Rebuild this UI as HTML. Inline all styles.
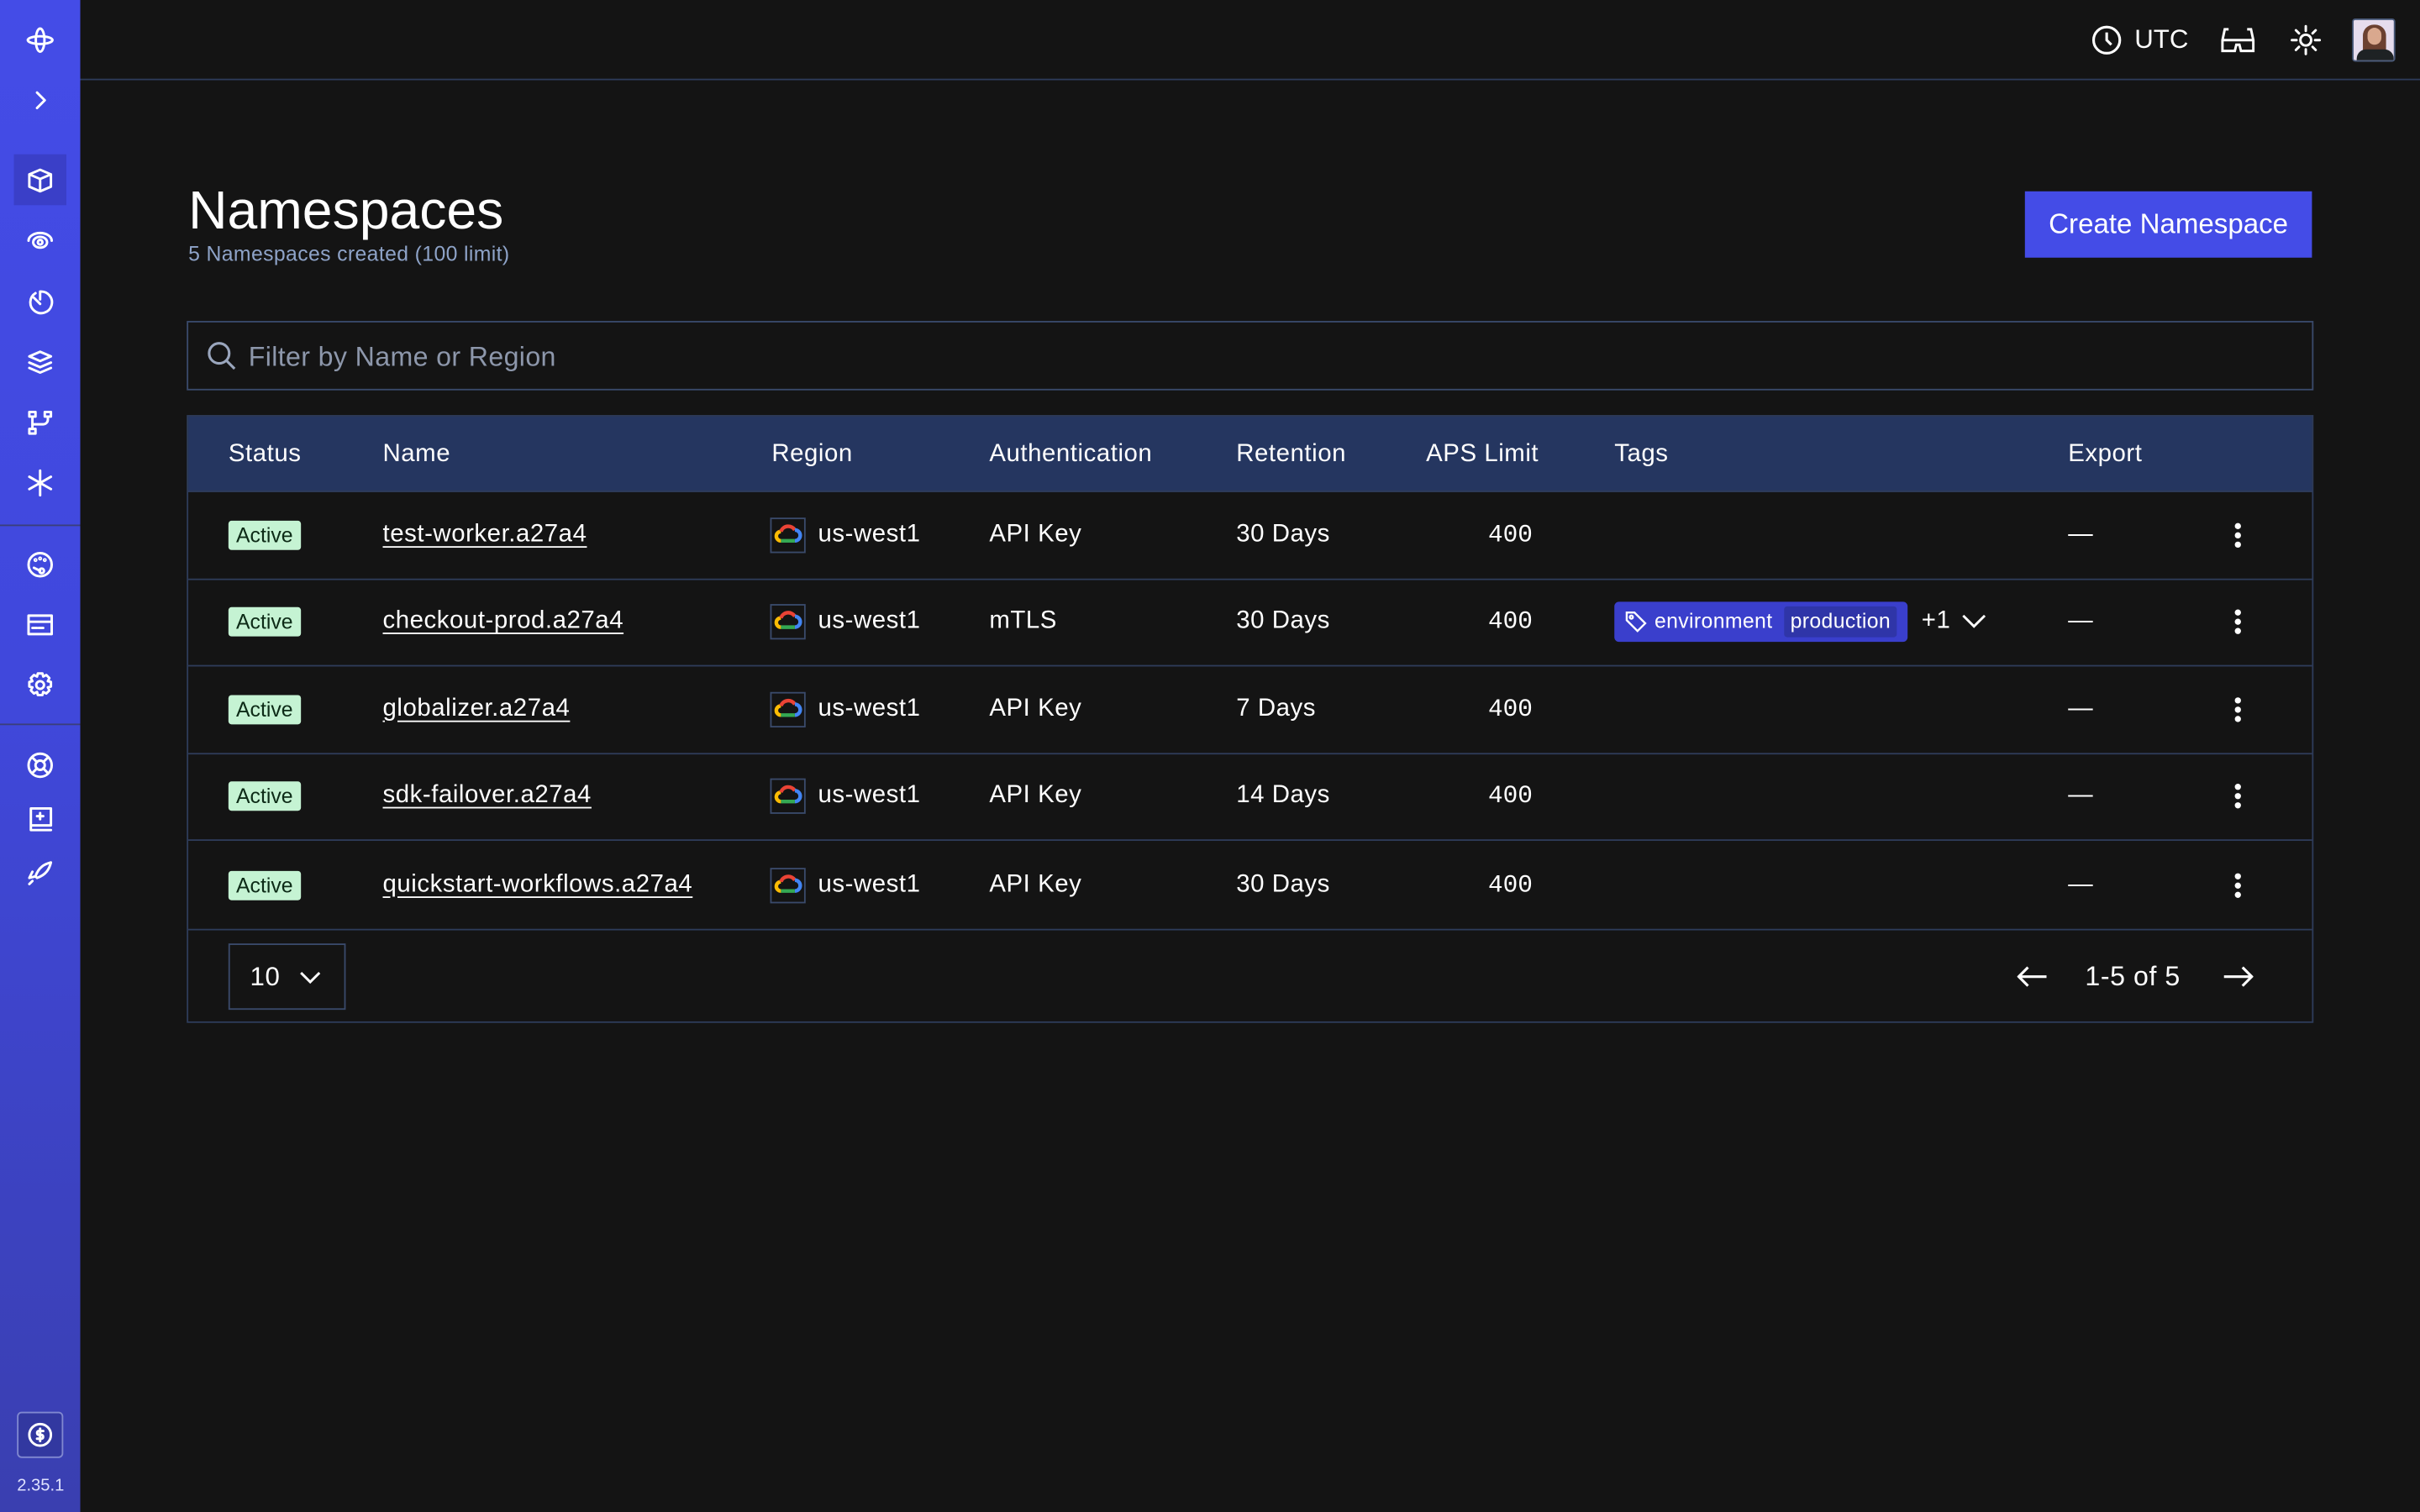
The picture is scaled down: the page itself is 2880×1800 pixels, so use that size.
<!DOCTYPE html>
<html><head><meta charset="utf-8"><style>
*{box-sizing:border-box;margin:0;padding:0}
html,body{width:2880px;height:1800px;overflow:hidden;background:#141414}
#w{width:1568px;height:980px;transform:scale(1.836735);transform-origin:0 0;position:relative;background:#141414;font-family:"Liberation Sans",sans-serif;color:#fff}
.sb{position:absolute;left:0;top:0;width:52px;height:980px;background:linear-gradient(#444ce7 0%,#4048dc 45%,#3a3fb0 100%)}
.sb svg{position:absolute;left:17px;width:18px;height:18px;fill:none;stroke:#fff;stroke-width:1.6;stroke-linecap:round;stroke-linejoin:round}
.sep{position:absolute;left:0;width:52px;height:1px;background:#3b3f7a}
.top{position:absolute;left:52px;top:0;right:0;height:52px;border-bottom:1px solid #2e3c5a}
.a{position:absolute}
.tbl{position:absolute;left:121px;top:269px;width:1378px;height:394px;border:1px solid #2e3c5a}
.hd{position:absolute;left:0;top:0;width:100%;height:49px;background:#253660;font-size:16px;letter-spacing:.3px}
.row{position:absolute;left:0;width:100%;height:56.5px;border-top:1px solid #2e3c5a;font-size:16px;letter-spacing:.3px}
.c{position:absolute;top:50%;transform:translateY(-50%);white-space:nowrap}
.badge{background:#c5f3d3;color:#0d2b17;font-size:13.5px;padding:2px 5px;border-radius:2px;letter-spacing:0}
.nm{text-decoration:underline;text-underline-offset:3px}
.reg{width:23px;height:23px;border:1px solid #3a4a6b}
.mono{font-family:"Liberation Mono",monospace;letter-spacing:0}
.kb{width:4px}
.kb i{display:block;width:4px;height:4px;border-radius:2px;background:#fff;margin:2px 0}
</style></head><body><div id="w">
<div class="sb">
<svg style="top:17px" viewBox="0 0 18 18"><ellipse cx="9" cy="9" rx="8" ry="2.5"/><ellipse cx="9" cy="9" rx="2.8" ry="7.5"/></svg>
<svg style="top:56px" viewBox="0 0 18 18"><path d="M7 4l5 5-5 5"/></svg>
<div style="position:absolute;left:9px;top:100px;width:34px;height:33px;background:#3a3fc8"></div>
<svg style="top:108px" viewBox="0 0 18 18"><path d="M2 5l7-3 7 3v8l-7 3-7-3z M2 5l7 3 7-3 M9 8v8"/></svg>
<svg style="top:147px" viewBox="0 0 18 18"><path d="M1.5 9a7.5 5 0 0 1 15 0"/><ellipse cx="9" cy="10" rx="4.5" ry="3.5"/><circle cx="9" cy="10" r="1.5"/></svg>
<svg style="top:187px" viewBox="0 0 18 18"><path d="M6 3a7 7 0 1 0 3-1v5"/><path d="M5 6l4 4"/></svg>
<svg style="top:226px" viewBox="0 0 18 18"><path d="M9 2l7 3-7 3-7-3z M2 9l7 3 7-3 M2 12.5l7 3 7-3"/></svg>
<svg style="top:265px" viewBox="0 0 18 18"><rect x="2" y="2" width="4" height="3"/><rect x="2" y="13" width="4" height="3"/><rect x="12" y="2" width="4" height="3"/><path d="M4 5v8 M14 5v2a3 3 0 0 1-3 3H4"/></svg>
<svg style="top:304px" viewBox="0 0 18 18"><path d="M9 1v16 M2 5l14 8 M2 13l14-8"/></svg>
<div class="sep" style="top:340px"></div>
<svg style="top:357px" viewBox="0 0 18 18"><circle cx="9" cy="9" r="7.5"/><path d="M5 11l4 2"/><circle cx="10" cy="13" r="1.5"/><circle cx="6" cy="6" r=".5"/><circle cx="9" cy="5" r=".5"/><circle cx="12" cy="6" r=".5"/></svg>
<svg style="top:396px" viewBox="0 0 18 18"><rect x="1.5" y="3" width="15" height="12"/><path d="M1.5 7h15 M4 11h3 M8 11h3"/></svg>
<svg style="top:435px" viewBox="0 0 18 18"><circle cx="9" cy="9" r="2.5"/><path d="M7.5 1.5h3l.5 2 2-1 2 2-1 2 2 .5v3l-2 .5 1 2-2 2-2-1-.5 2h-3l-.5-2-2 1-2-2 1-2-2-.5v-3l2-.5-1-2 2-2 2 1z"/></svg>
<div class="sep" style="top:469px"></div>
<svg style="top:487px" viewBox="0 0 18 18"><circle cx="9" cy="9" r="7.5"/><circle cx="9" cy="9" r="3"/><path d="M4 4l3 3 M14 4l-3 3 M4 14l3-3 M14 14l-3-3"/></svg>
<svg style="top:522px" viewBox="0 0 18 18"><path d="M3 2h13v11H3z M3 13v3h13 M7 7h4 M9 5v4"/></svg>
<svg style="top:557px" viewBox="0 0 18 18"><path d="M6 11c2-6 6-8 10-9-1 4-3 8-9 10z M6 11l-4 1 2-4 M4 14l-2 2"/></svg>
<div style="position:absolute;left:11px;top:915px;width:30px;height:30px;border:1px solid #8088d0;border-radius:3px;background:#3238a0"></div>
<svg style="top:921px" viewBox="0 0 18 18"><circle cx="9" cy="9" r="7"/><path d="M11 6.5H8a1.3 1.3 0 0 0 0 2.5h2a1.3 1.3 0 0 1 0 2.5H7 M9 5v8"/></svg>
<div class="a" style="left:11px;top:957px;font-size:11px;color:#dfe2ff">2.35.1</div>
</div>
<div class="top">
<svg class="a" style="left:1303px;top:16px" width="20" height="20" viewBox="0 0 20 20" fill="none" stroke="#fff" stroke-width="1.7"><circle cx="10" cy="10" r="8.5"/><path d="M10 5v5l3 3"/></svg>
<div class="a" style="left:1331px;top:16px;font-size:17px">UTC</div>
<svg class="a" style="left:1387px;top:17px" width="22" height="18" viewBox="0 0 22 18" fill="none" stroke="#fff" stroke-width="1.6"><path d="M5 2H2.5L1 9v7h8l1-4h2l1 4h8V9L19.5 2H17 M1 9h20"/></svg>
<svg class="a" style="left:1432px;top:16px" width="20" height="20" viewBox="0 0 20 20" fill="none" stroke="#fff" stroke-width="1.6" stroke-linecap="round"><circle cx="10" cy="10" r="3.5"/><path d="M10 1v3 M10 16v3 M1 10h3 M16 10h3 M3.6 3.6l2 2 M14.4 14.4l2 2 M3.6 16.4l2-2 M14.4 5.6l2-2"/></svg>
<div class="a" style="left:1472px;top:12px;width:28px;height:28px;border:1px solid #4a5a7a;border-radius:2px;background:#e6dced;overflow:hidden"><div style="position:absolute;left:6px;top:3px;width:15px;height:22px;border-radius:7px 7px 2px 2px;background:#6b4030"></div><div style="position:absolute;left:9px;top:5px;width:9px;height:11px;border-radius:5px;background:#d9a88e"></div><div style="position:absolute;left:2px;top:19px;width:24px;height:10px;border-radius:6px 6px 0 0;background:#1e2224"></div></div>
</div>
<div class="a" style="left:122px;top:117px;font-size:35px">Namespaces</div>
<div class="a" style="left:122px;top:157px;font-size:13.5px;letter-spacing:.2px;color:#8ea3c8">5 Namespaces created (100 limit)</div>
<div class="a" style="left:1312px;top:124px;width:186px;height:43px;background:#444ce7;font-size:18px;line-height:43px;text-align:center">Create Namespace</div>
<div class="a" style="left:121px;top:208px;width:1378px;height:45px;border:1px solid #3a4a6b"></div>
<svg class="a" style="left:134px;top:221px" width="19" height="19" viewBox="0 0 19 19" fill="none" stroke="#9aa6bd" stroke-width="1.7"><circle cx="8" cy="8" r="6.5"/><path d="M13 13l5 5"/></svg>
<div class="a" style="left:161px;top:221px;font-size:17.5px;letter-spacing:.2px;color:#8d97ab">Filter by Name or Region</div>
<div class="tbl">
<div class="hd">
<div class="c" style="left:26px">Status</div><div class="c" style="left:126px">Name</div><div class="c" style="left:378px">Region</div><div class="c" style="left:519px">Authentication</div><div class="c" style="left:679px">Retention</div><div class="c" style="left:802px">APS Limit</div><div class="c" style="left:924px">Tags</div><div class="c" style="left:1218px">Export</div>
</div>
<div class="row" style="top:48px"><div class="c badge" style="left:26px">Active</div><div class="c nm" style="left:126px">test-worker.a27a4</div><div class="c reg" style="left:377px"><svg width="21" height="21" viewBox="0 0 21 21"><path d="M6 14a3 3 0 0 1 0-6" stroke="#fbbc04" stroke-width="2.4" fill="none"/><path d="M6 8a5 5 0 0 1 9-1" stroke="#ea4335" stroke-width="2.4" fill="none"/><path d="M15 7a3.5 3.5 0 0 1 0 7" stroke="#4285f4" stroke-width="2.4" fill="none"/><path d="M6 14h9" stroke="#34a853" stroke-width="2.4"/></svg></div><div class="c" style="left:408px">us-west1</div><div class="c" style="left:519px">API Key</div><div class="c" style="left:679px">30 Days</div><div class="c mono" style="right:505px">400</div><div class="c" style="left:1218px">—</div><div class="c kb" style="left:1326px"><i></i><i></i><i></i></div></div>
<div class="row" style="top:104.5px"><div class="c badge" style="left:26px">Active</div><div class="c nm" style="left:126px">checkout-prod.a27a4</div><div class="c reg" style="left:377px"><svg width="21" height="21" viewBox="0 0 21 21"><path d="M6 14a3 3 0 0 1 0-6" stroke="#fbbc04" stroke-width="2.4" fill="none"/><path d="M6 8a5 5 0 0 1 9-1" stroke="#ea4335" stroke-width="2.4" fill="none"/><path d="M15 7a3.5 3.5 0 0 1 0 7" stroke="#4285f4" stroke-width="2.4" fill="none"/><path d="M6 14h9" stroke="#34a853" stroke-width="2.4"/></svg></div><div class="c" style="left:408px">us-west1</div><div class="c" style="left:519px">mTLS</div><div class="c" style="left:679px">30 Days</div><div class="c mono" style="right:505px">400</div>
<div class="c" style="left:924px;height:26px;width:190px;background:#3a3fcc;border-radius:3px;font-size:13.5px;letter-spacing:.2px"><svg style="position:absolute;left:7px;top:6px" width="14" height="14" viewBox="0 0 14 14" fill="none" stroke="#fff" stroke-width="1.3"><path d="M1 1h5l7 7-5 5-7-7z"/><circle cx="4" cy="4" r="1"/></svg><span style="position:absolute;left:26px;top:5px">environment</span><span style="position:absolute;left:110px;top:3px;height:20px;padding:2px 4px;background:#2f35a8;border-radius:2px">production</span></div>
<div class="c" style="left:1123px">+1</div><svg class="c" style="left:1149px" width="16" height="10" viewBox="0 0 16 10" fill="none" stroke="#fff" stroke-width="1.6"><path d="M1 1l7 7 7-7"/></svg>
<div class="c" style="left:1218px">—</div><div class="c kb" style="left:1326px"><i></i><i></i><i></i></div></div>
<div class="row" style="top:161px"><div class="c badge" style="left:26px">Active</div><div class="c nm" style="left:126px">globalizer.a27a4</div><div class="c reg" style="left:377px"><svg width="21" height="21" viewBox="0 0 21 21"><path d="M6 14a3 3 0 0 1 0-6" stroke="#fbbc04" stroke-width="2.4" fill="none"/><path d="M6 8a5 5 0 0 1 9-1" stroke="#ea4335" stroke-width="2.4" fill="none"/><path d="M15 7a3.5 3.5 0 0 1 0 7" stroke="#4285f4" stroke-width="2.4" fill="none"/><path d="M6 14h9" stroke="#34a853" stroke-width="2.4"/></svg></div><div class="c" style="left:408px">us-west1</div><div class="c" style="left:519px">API Key</div><div class="c" style="left:679px">7 Days</div><div class="c mono" style="right:505px">400</div><div class="c" style="left:1218px">—</div><div class="c kb" style="left:1326px"><i></i><i></i><i></i></div></div>
<div class="row" style="top:217.5px"><div class="c badge" style="left:26px">Active</div><div class="c nm" style="left:126px">sdk-failover.a27a4</div><div class="c reg" style="left:377px"><svg width="21" height="21" viewBox="0 0 21 21"><path d="M6 14a3 3 0 0 1 0-6" stroke="#fbbc04" stroke-width="2.4" fill="none"/><path d="M6 8a5 5 0 0 1 9-1" stroke="#ea4335" stroke-width="2.4" fill="none"/><path d="M15 7a3.5 3.5 0 0 1 0 7" stroke="#4285f4" stroke-width="2.4" fill="none"/><path d="M6 14h9" stroke="#34a853" stroke-width="2.4"/></svg></div><div class="c" style="left:408px">us-west1</div><div class="c" style="left:519px">API Key</div><div class="c" style="left:679px">14 Days</div><div class="c mono" style="right:505px">400</div><div class="c" style="left:1218px">—</div><div class="c kb" style="left:1326px"><i></i><i></i><i></i></div></div>
<div class="row" style="top:274px;height:58px"><div class="c badge" style="left:26px">Active</div><div class="c nm" style="left:126px">quickstart-workflows.a27a4</div><div class="c reg" style="left:377px"><svg width="21" height="21" viewBox="0 0 21 21"><path d="M6 14a3 3 0 0 1 0-6" stroke="#fbbc04" stroke-width="2.4" fill="none"/><path d="M6 8a5 5 0 0 1 9-1" stroke="#ea4335" stroke-width="2.4" fill="none"/><path d="M15 7a3.5 3.5 0 0 1 0 7" stroke="#4285f4" stroke-width="2.4" fill="none"/><path d="M6 14h9" stroke="#34a853" stroke-width="2.4"/></svg></div><div class="c" style="left:408px">us-west1</div><div class="c" style="left:519px">API Key</div><div class="c" style="left:679px">30 Days</div><div class="c mono" style="right:505px">400</div><div class="c" style="left:1218px">—</div><div class="c kb" style="left:1326px"><i></i><i></i><i></i></div></div>
<div class="row" style="top:332px;height:61px">
<div class="c" style="left:26px;width:76px;height:43px;border:1px solid #3a4a6b;font-size:17px"><span style="position:absolute;left:13px;top:11px">10</span><svg style="position:absolute;left:45px;top:17px" width="14" height="9" viewBox="0 0 14 9" fill="none" stroke="#fff" stroke-width="1.6"><path d="M1 1l6 6 6-6"/></svg></div>
<svg class="c" style="left:1185px" width="20" height="14" viewBox="0 0 20 14" fill="none" stroke="#fff" stroke-width="1.7"><path d="M19 7H2 M7 1L1 7l6 6"/></svg>
<div class="c" style="left:1229px;font-size:17.5px">1-5 of 5</div>
<svg class="c" style="left:1318px" width="20" height="14" viewBox="0 0 20 14" fill="none" stroke="#fff" stroke-width="1.7"><path d="M1 7h17 M13 1l6 6-6 6"/></svg>
</div>
</div>
</div></body></html>
